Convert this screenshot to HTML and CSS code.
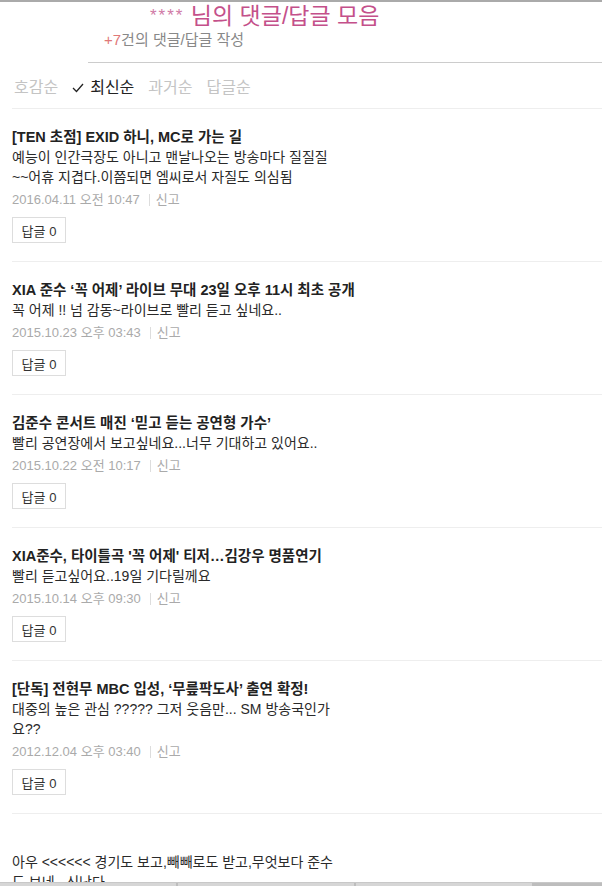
FILE: index.html
```html
<!DOCTYPE html>
<html lang="ko">
<head>
<meta charset="utf-8">
<title>님의 댓글/답글 모음</title>
<link rel="stylesheet" href="styles.css">
</head>
<body>
<div class="page">
  <header class="head">
    <h1 class="head-title"><span class="stars">****</span> 님의 댓글/답글 모음</h1>
    <p class="head-sub"><span class="count">+7</span>건의 댓글/답글 작성</p>
  </header>

  <nav class="sort">
    <span class="sort-item">호감순</span>
    <span class="sort-item is-on"><svg class="check" width="12" height="10" viewBox="0 0 12 10"><polyline points="1,5 4.5,8.5 11,1" fill="none" stroke="#222" stroke-width="1.3"/></svg>최신순</span>
    <span class="sort-item">과거순</span>
    <span class="sort-item">답글순</span>
  </nav>

  <ul class="list">
    <li class="item">
      <div class="item-title">[TEN 초점] EXID 하니, MC로 가는 길</div>
      <div class="item-text">예능이 인간극장도 아니고 맨날나오는 방송마다 질질질<br>~~어휴 지겹다.이쯤되면 엠씨로서 자질도 의심됨</div>
      <div class="item-meta">2016.04.11 오전 10:47<span class="bar"></span>신고</div>
      <button class="reply">답글 0</button>
    </li>
    <li class="item">
      <div class="item-title">XIA 준수 ‘꼭 어제’ 라이브 무대 23일 오후 11시 최초 공개</div>
      <div class="item-text">꼭 어제 !! 넘 감동~라이브로 빨리 듣고 싶네요..</div>
      <div class="item-meta">2015.10.23 오후 03:43<span class="bar"></span>신고</div>
      <button class="reply">답글 0</button>
    </li>
    <li class="item">
      <div class="item-title">김준수 콘서트 매진 ‘믿고 듣는 공연형 가수’</div>
      <div class="item-text">빨리 공연장에서 보고싶네요...너무 기대하고 있어요..</div>
      <div class="item-meta">2015.10.22 오전 10:17<span class="bar"></span>신고</div>
      <button class="reply">답글 0</button>
    </li>
    <li class="item">
      <div class="item-title">XIA준수, 타이틀곡 '꼭 어제' 티저…김강우 명품연기</div>
      <div class="item-text">빨리 듣고싶어요..19일 기다릴께요</div>
      <div class="item-meta">2015.10.14 오후 09:30<span class="bar"></span>신고</div>
      <button class="reply">답글 0</button>
    </li>
    <li class="item">
      <div class="item-title">[단독] 전현무 MBC 입성, ‘무릎팍도사’ 출연 확정!</div>
      <div class="item-text">대중의 높은 관심 ????? 그저 웃음만... SM 방송국인가<br>요??</div>
      <div class="item-meta">2012.12.04 오후 03:40<span class="bar"></span>신고</div>
      <button class="reply">답글 0</button>
    </li>
    <li class="item">
      <div class="item-title"></div>
      <div class="item-text">아우 &lt;&lt;&lt;&lt;&lt;&lt; 경기도 보고,빼빼로도 받고,무엇보다 준수<br>도 보네.. 신난다</div>
    </li>
  </ul>
</div>

<div class="dock">
  <span class="dock-seg"></span>
  <span class="dock-seg"></span>
  <span class="dock-seg"></span>
</div>
</body>
</html>
```

FILE: styles.css
```css
* {
  box-sizing: border-box;
}

html, body {
  margin: 0;
  padding: 0;
  background: #fff;
}

body {
  font-family: "Liberation Sans", "Noto Sans CJK KR", sans-serif;
  color: #333;
  border-top: 2px solid #aaa;
  overflow: hidden;
  height: 886px;
}

.page {
  padding-left: 12px;
}

/* header */
.head {
  margin-left: 76px;
  padding-top: 2px;
  border-bottom: 1px solid #ccc;
  padding-bottom: 13px;
}

.head-title {
  margin: 0;
  padding-left: 62px;
  font-size: 23px;
  font-weight: 400;
  line-height: 24px;
  color: #c4508a;
}

.stars {
  font-size: 17px;
  letter-spacing: 2px;
  color: #d07aa6;
  vertical-align: 3px;
}

.head-sub {
  margin: 3px 0 0;
  padding-left: 16px;
  font-size: 15px;
  line-height: 18px;
  color: #888;
}

.count {
  color: #e07878;
}

/* sort tabs */
.sort {
  display: flex;
  gap: 14px;
  padding: 15px 0 10px 2px;
  border-bottom: 1px solid #eee;
  font-size: 16px;
  line-height: 20px;
  color: #c4c4c4;
}

.sort-item {
  display: flex;
  align-items: center;
}

.sort-item.is-on {
  color: #222;
  gap: 6px;
}

.check {
  display: block;
}

/* comment list */
.list {
  list-style: none;
  margin: 0;
  padding: 0;
}

.item {
  padding: 18px 0 18px;
  border-bottom: 1px solid #eee;
}

.item-title {
  min-height: 20px;
  font-size: 14.5px;
  font-weight: 700;
  line-height: 20px;
  color: #222;
}

.item-text {
  font-size: 14px;
  line-height: 20px;
  color: #2a2a2a;
}

.item-meta {
  display: flex;
  align-items: center;
  margin-top: 4px;
  font-size: 13px;
  line-height: 18px;
  color: #aaa;
}

.bar {
  width: 1px;
  height: 12px;
  background: #ddd;
  margin: 0 6px 0 9px;
}

.reply {
  display: block;
  margin-top: 8px;
  width: 54px;
  height: 26px;
  padding: 0;
  border: 1px solid #ddd;
  background: #fff;
  font-family: "Liberation Sans", "Noto Sans CJK KR", sans-serif;
  font-size: 13px;
  color: #333;
}

/* bottom window strip */
.dock {
  position: fixed;
  left: 0;
  right: 0;
  bottom: 0;
  height: 4px;
  display: flex;
  gap: 2px;
  background: #bdbdbd;
  border-top: 1px solid #c8c8c8;
}

.dock-seg {
  width: 176px;
  background: #d6d6d6;
}
```
